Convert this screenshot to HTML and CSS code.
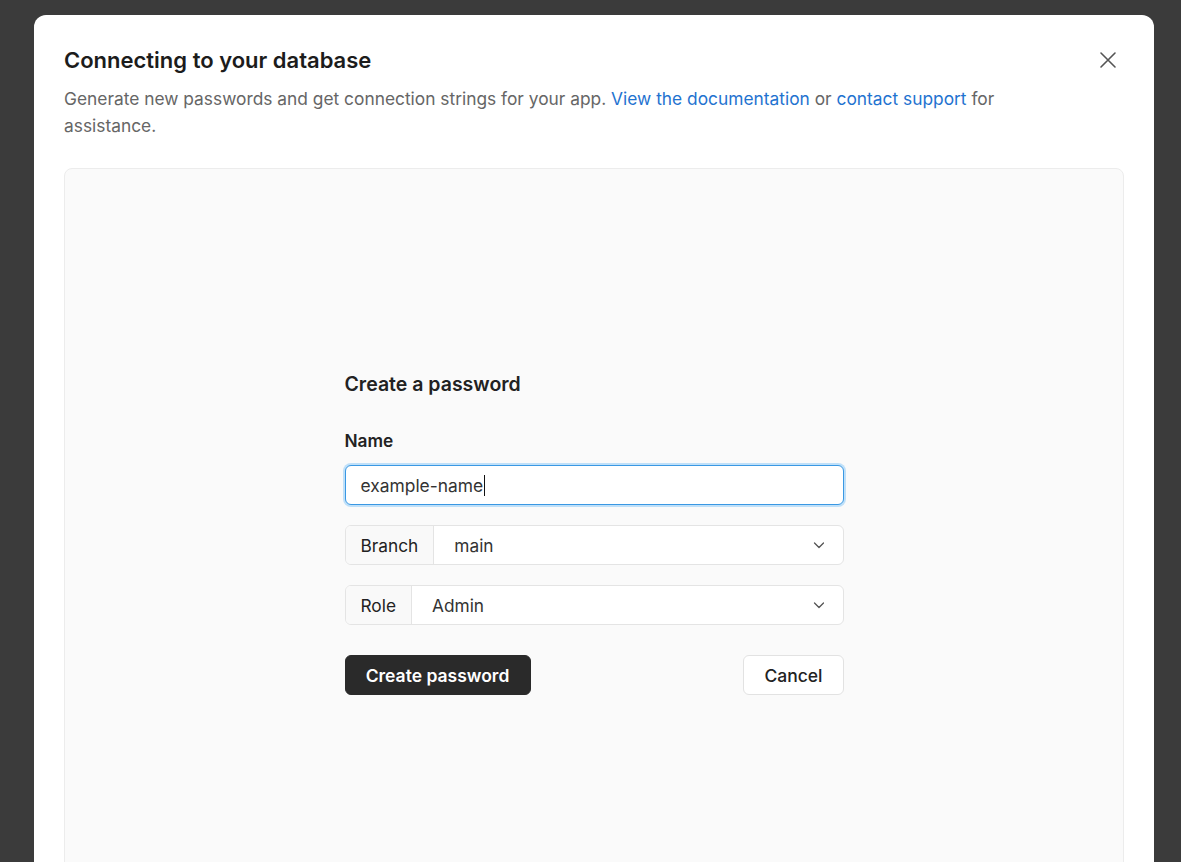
FILE: index.html
```html
<!DOCTYPE html>
<html lang="en">
<head>
<meta charset="utf-8">
<title>Connecting to your database</title>
<link rel="stylesheet" href="styles.css">
</head>
<body>
<div class="backdrop">
  <div class="modal">
    <div class="modal-head">
      <h1 class="title">Connecting to your database</h1>
      <button class="close" aria-label="Close">
        <svg width="18" height="18" viewBox="0 0 18 18" fill="none" stroke="#555" stroke-width="1.6" stroke-linecap="round"><path d="M2 2L16 16M16 2L2 16"/></svg>
      </button>
    </div>
    <p class="desc">Generate new passwords and get connection strings for your app. <a href="#">View the documentation</a> or <a href="#">contact support</a> for assistance.</p>
    <div class="panel">
      <div class="form">
        <h2 class="form-title">Create a password</h2>
        <div class="label">Name</div>
        <div class="input"><span class="input-text">example-name</span><span class="caret"></span></div>
        <div class="select">
          <div class="select-label">Branch</div>
          <div class="select-value">main</div>
          <svg class="chev" width="14" height="14" viewBox="0 0 14 14" fill="none" stroke="#555" stroke-width="1.3" stroke-linecap="round" stroke-linejoin="round"><path d="M2.5 5l4.5 4.5L11.5 5"/></svg>
        </div>
        <div class="select">
          <div class="select-label">Role</div>
          <div class="select-value">Admin</div>
          <svg class="chev" width="14" height="14" viewBox="0 0 14 14" fill="none" stroke="#555" stroke-width="1.3" stroke-linecap="round" stroke-linejoin="round"><path d="M2.5 5l4.5 4.5L11.5 5"/></svg>
        </div>
        <div class="actions">
          <button class="btn btn-primary">Create password</button>
          <button class="btn btn-secondary">Cancel</button>
        </div>
      </div>
    </div>
  </div>
</div>
</body>
</html>
```
FILE: styles.css
```css
* { box-sizing: border-box; }
html, body {
  margin: 0;
  height: 100%;
  overflow: hidden;
}
body {
  font-family: Inter, "Noto Sans", "Liberation Sans", sans-serif;
  background: #3b3b3b;
  color: #222;
}
.backdrop {
  padding: 15px 27px 0 34px;
}
.modal {
  width: 1120px;
  min-height: 1000px;
  background: #fff;
  border-radius: 12px;
  padding: 30px 30px 0 30px;
}
.modal-head {
  display: flex;
  align-items: center;
  justify-content: space-between;
}
.title {
  margin: 0;
  font-size: 22px;
  line-height: 30px;
  font-weight: 600;
  color: #1c1c1c;
}
.close {
  border: 0;
  background: none;
  padding: 0;
  width: 24px;
  height: 24px;
  display: flex;
  align-items: center;
  justify-content: center;
  margin-right: 4px;
  cursor: pointer;
}
.desc {
  margin: 10px 0 0;
  font-size: 17.35px;
  line-height: 27px;
  color: #666;
  max-width: 960px;
}
.desc a {
  color: #1f73d0;
  text-decoration: none;
}
.panel {
  margin-top: 29px;
  background: #fafafa;
  border: 1px solid #ececec;
  border-radius: 8px;
  min-height: 900px;
  padding-top: 203px;
}
.form {
  width: 499px;
  margin: 0 auto;
}
.form-title {
  margin: 0;
  font-size: 19.5px;
  line-height: 24px;
  font-weight: 600;
  color: #222;
}
.label {
  margin-top: 35px;
  font-size: 17.3px;
  line-height: 20px;
  font-weight: 600;
  color: #222;
}
.input {
  margin-top: 14px;
  height: 40px;
  background: #fff;
  border: 1px solid #3a98e3;
  border-radius: 6px;
  box-shadow: 0 0 0 2px #bfe0f9;
  display: flex;
  align-items: center;
  padding-left: 15px;
  font-size: 17.4px;
  color: #333;
}
.caret {
  display: inline-block;
  width: 1px;
  height: 21px;
  background: #111;
  margin-left: 1px;
}
.select {
  margin-top: 20px;
  height: 40px;
  background: #fff;
  border: 1px solid #e4e4e4;
  border-radius: 6px;
  display: flex;
  align-items: center;
  overflow: hidden;
  font-size: 17.3px;
}
.select-label {
  height: 100%;
  display: flex;
  align-items: center;
  padding: 0 15px;
  background: #f9f9f9;
  border-right: 1px solid #e4e4e4;
  color: #222;
}
.select-value {
  flex: 1;
  padding-left: 20px;
  color: #333;
}
.chev {
  margin-right: 17px;
}
.actions {
  margin-top: 30px;
  display: flex;
  justify-content: space-between;
}
.btn {
  font-family: inherit;
  height: 40px;
  border-radius: 6px;
  font-size: 17.5px;
  cursor: pointer;
}
.btn-primary {
  background: #2a2a2a;
  color: #fff;
  border: 1px solid #2a2a2a;
  font-weight: 600;
  padding: 0 20px;
  min-width: 186px;
}
.btn-secondary {
  background: #fff;
  color: #222;
  border: 1px solid #e2e2e2;
  font-weight: 500;
  padding: 0 20px;
}
```
